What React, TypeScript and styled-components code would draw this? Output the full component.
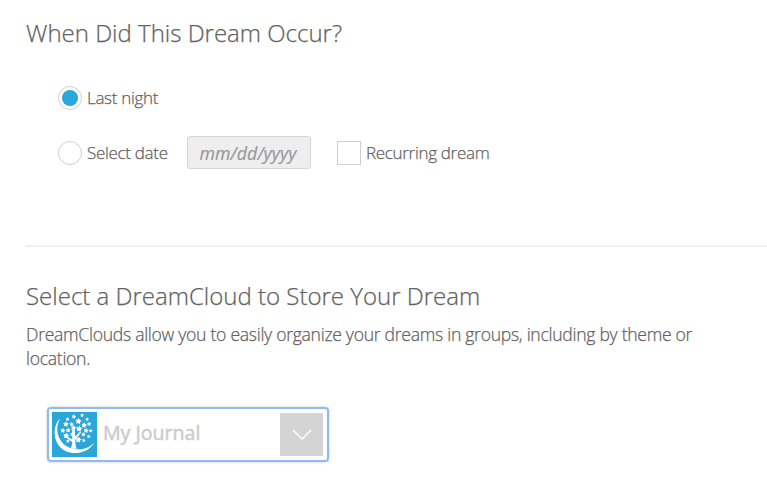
import React from "react";
import styled, { createGlobalStyle } from "styled-components";

const GlobalStyle = createGlobalStyle`
  *, *::before, *::after { box-sizing: border-box; }
  body {
    margin: 0;
    background: #fff;
    color: #626262;
    font-family: "Open Sans", sans-serif;
    font-weight: 300;
    -webkit-text-stroke: 0.25px currentColor;
    overflow: hidden;
  }
`;

const Page = styled.main`
  width: 767px;
  height: 495px;
  padding: 16px 0 0 26px;
`;

const DateSection = styled.section`
  height: 231px;
  border-bottom: 2px solid #f0f0f0;
`;

const CloudSection = styled.section`
  padding-top: 32px;
`;

const Heading = styled.h2`
  margin: 0;
  font-size: 24px;
  line-height: 34px;
  font-weight: 300;
  white-space: nowrap;
`;

const Options = styled.div`
  display: flex;
  flex-direction: column;
  gap: 23px;
  padding: 32px 0 0 32px;
`;

const OptionRow = styled.div`
  display: flex;
  align-items: center;
  height: 32px;
`;

const Choice = styled.label<{ $width?: number }>`
  display: flex;
  align-items: center;
  gap: 5px;
  width: ${(p) => (p.$width ? `${p.$width}px` : "auto")};
  font-size: 17px;
  line-height: 24px;
  letter-spacing: -0.31px;
  white-space: nowrap;
`;

const Radio = styled.span<{ $checked?: boolean }>`
  display: flex;
  align-items: center;
  justify-content: center;
  flex: none;
  width: 24px;
  height: 24px;
  border: 1px solid #cfcfcf;
  border-radius: 50%;

  &::after {
    content: "";
    width: 16px;
    height: 16px;
    border-radius: 50%;
    background: ${(p) => (p.$checked ? "#2ba6da" : "transparent")};
  }
`;

const Checkbox = styled.span`
  flex: none;
  width: 24px;
  height: 24px;
  border: 1px solid #cfcfcf;
`;

const DateInput = styled.input`
  align-self: flex-start;
  width: 124px;
  height: 33px;
  margin: -1px 26px 0 0;
  padding: 0 2px 0 0;
  border: 1px solid #d5d5d5;
  border-radius: 3px;
  background: #eee;
  font: italic 400 17.8px "Open Sans", sans-serif;
  text-align: center;
  -webkit-text-stroke: 0.2px #999;

  &::placeholder { color: #999; opacity: 1; }
`;

const Description = styled.p`
  margin: 9px 0 0;
  width: 690px;
  font-size: 17.6px;
  line-height: 24px;
  letter-spacing: -0.29px;
`;

const CloudSelect = styled.div`
  display: flex;
  align-items: center;
  width: 282px;
  height: 55px;
  margin: 37px 0 0 21px;
  padding: 0 4px 0 3px;
  border: 2px solid #8fbaf3;
  border-radius: 4px;
  box-shadow: 0 0 3px rgba(0, 0, 0, 0.22);
`;

const SelectedName = styled.span`
  flex: 1;
  padding: 0 0 4px 6px;
  color: #ccc;
  font-size: 19.6px;
  font-weight: 400;
  line-height: 26px;
  -webkit-text-stroke: 0.5px #ccc;
`;

const ArrowButton = styled.span`
  display: flex;
  align-items: center;
  justify-content: center;
  width: 43px;
  height: 43px;
  background: #d4d4d4;
`;

const stars: [number, number, number][] = [
  [66, 14, 7], [91, 10, 6], [47, 22, 6], [80, 28, 10], [106, 22, 6],
  [42, 37, 9], [59, 37, 7], [97, 40, 9], [112, 36, 7], [33, 56, 8],
  [49, 55, 8], [65, 48, 9], [82, 51, 10], [103, 56, 8], [117, 57, 6],
  [43, 72, 10], [61, 67, 7], [95, 68, 7], [80, 84, 10], [96, 86, 6],
  [111, 74, 6], [48, 88, 6],
];

const starPoints = (cx: number, cy: number, r: number) =>
  Array.from({ length: 10 }, (_, i) => {
    const a = (Math.PI * i) / 5 - Math.PI / 2 + 0.15;
    const d = i % 2 ? r * 0.56 : r;
    return `${(cx + d * Math.cos(a)).toFixed(1)},${(cy + d * Math.sin(a)).toFixed(1)}`;
  }).join(" ");

const TreeLogo = () => (
  <svg width="45" height="45" viewBox="0 0 136 136" aria-hidden="true">
    <rect width="136" height="136" fill="#2ba6da" />
    <g fill="#fff">
      <path d="M25 19C6 36 2 72 18 98C43 136 106 131 128 92C104 118 57 121 32 94C12 70 12 42 25 19Z" />
      <path d="M61 55L69 52L70 74L85 59L88 62L71 83C70 94 71 103 75 111H55C60 104 61 98 61 91L43 78L45 74L61 82Z" />
      {stars.map(([x, y, r]) => (
        <polygon key={`${x}-${y}`} points={starPoints(x, y, r)} />
      ))}
    </g>
  </svg>
);

const ChevronDown = () => (
  <svg width="20" height="12" viewBox="0 0 20 12" aria-hidden="true">
    <path d="M1 1L10 10L19 1" fill="none" stroke="#fff" strokeWidth="1.5" />
  </svg>
);

export default function App() {
  return (
    <>
      <GlobalStyle />
      <Page>
        <DateSection>
          <Heading>When Did This Dream Occur?</Heading>
          <Options>
            <OptionRow>
              <Choice><Radio $checked />Last night</Choice>
            </OptionRow>
            <OptionRow>
              <Choice $width={129}><Radio />Select date</Choice>
              <DateInput placeholder="mm/dd/yyyy" aria-label="Date" />
              <Choice><Checkbox />Recurring dream</Choice>
            </OptionRow>
          </Options>
        </DateSection>
        <CloudSection>
          <Heading>Select a DreamCloud to Store Your Dream</Heading>
          <Description>
            DreamClouds allow you to easily organize your dreams in groups, including by theme or
            location.
          </Description>
          <CloudSelect>
            <TreeLogo />
            <SelectedName>My Journal</SelectedName>
            <ArrowButton><ChevronDown /></ArrowButton>
          </CloudSelect>
        </CloudSection>
      </Page>
    </>
  );
}
